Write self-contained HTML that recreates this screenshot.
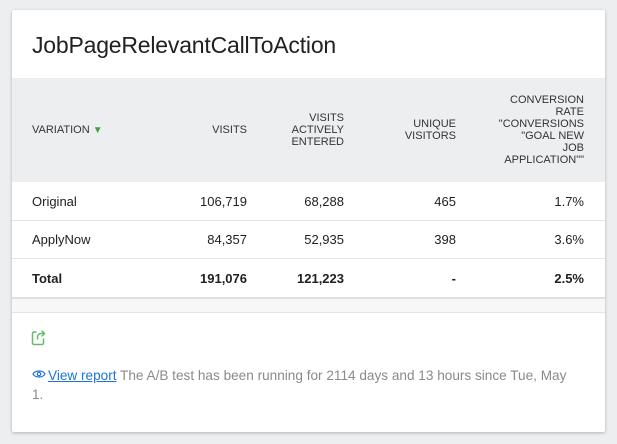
<!DOCTYPE html>
<html><head><style>
body{margin:0;width:617px;height:444px;background:#eceef0;font-family:"Liberation Sans",sans-serif;position:relative;overflow:hidden}
.card{position:absolute;left:12px;top:10px;width:593px;height:422px;background:#fff;box-shadow:0 1px 3px rgba(0,0,0,.25);border-radius:2px}
h1{position:absolute;left:20px;top:22px;margin:0;font-weight:normal;font-size:23px;color:#212121;letter-spacing:-0.2px}
.hd{position:absolute;left:0;top:68px;width:593px;height:104px;background:#eceef0}
.t{position:absolute;font-size:11px;line-height:12px;color:#333;text-align:right}
.c{position:absolute;font-size:13px;color:#212121;text-align:right}
.b{font-weight:bold}
.line{position:absolute;left:0;width:593px;height:1px;background:#e4e4e4}
</style></head><body>
<div class="card">
<h1>JobPageRelevantCallToAction</h1>
<div class="hd"></div>
<div class="t" style="left:20px;top:114px;text-align:left">VARIATION <span style="color:#43a047;font-size:10px">▼</span></div>
<div class="t" style="right:358px;top:114px">VISITS</div>
<div class="t" style="right:261px;top:102px">VISITS<br>ACTIVELY<br>ENTERED</div>
<div class="t" style="right:149px;top:108px">UNIQUE<br>VISITORS</div>
<div class="t" style="right:21px;top:84px">CONVERSION<br>RATE<br>"CONVERSIONS<br>"GOAL NEW<br>JOB<br>APPLICATION""</div>

<div class="c" style="left:20px;top:184px;text-align:left">Original</div>
<div class="c" style="right:358px;top:184px">106,719</div>
<div class="c" style="right:261px;top:184px">68,288</div>
<div class="c" style="right:149px;top:184px">465</div>
<div class="c" style="right:21px;top:184px">1.7%</div>
<div class="line" style="top:210px"></div>
<div class="c" style="left:20px;top:222px;text-align:left">ApplyNow</div>
<div class="c" style="right:358px;top:222px">84,357</div>
<div class="c" style="right:261px;top:222px">52,935</div>
<div class="c" style="right:149px;top:222px">398</div>
<div class="c" style="right:21px;top:222px">3.6%</div>
<div class="line" style="top:248px"></div>
<div class="c b" style="left:20px;top:261px;text-align:left">Total</div>
<div class="c b" style="right:358px;top:261px">191,076</div>
<div class="c b" style="right:261px;top:261px">121,223</div>
<div class="c b" style="right:149px;top:261px">-</div>
<div class="c b" style="right:21px;top:261px">2.5%</div>
<div class="line" style="top:287px;height:2px;background:#e0e0e0"></div>
<div style="position:absolute;left:0;top:289px;width:593px;height:13px;background:#f7f7f7;border-bottom:1px solid #e4e4e4"></div>
<svg style="position:absolute;left:19px;top:318px" width="16" height="18" viewBox="0 0 16 18" fill="none" stroke="#66bb6a" stroke-width="1.5" stroke-linejoin="round" stroke-linecap="round"><path d="M5 4H3a1.5 1.5 0 0 0-1.5 1.5v9.5A1.5 1.5 0 0 0 3 16.5h8a1.5 1.5 0 0 0 1.5-1.5v-4"/><path d="M6.5 11V9c0-2 1.5-3.5 3.5-3.5h3.5"/><path d="M11 3l2.5 2.5L11 8"/></svg>
<div style="position:absolute;left:20px;top:356px;width:545px;font-size:13.6px;line-height:19px;color:#8a8a8a"><svg width="14" height="10" viewBox="0 0 14 10" style="vertical-align:1px;margin-right:2px" fill="none" stroke="#1e73d8" stroke-width="1.2"><path d="M1 5c2-4 10-4 12 0c-2 4-10 4-12 0z"/><circle cx="7" cy="5" r="1.7"/></svg><a style="color:#1e73d8;text-decoration:underline">View report</a> The A/B test has been running for 2114 days and 13 hours since Tue, May 1.</div>
</div>
</body></html>
